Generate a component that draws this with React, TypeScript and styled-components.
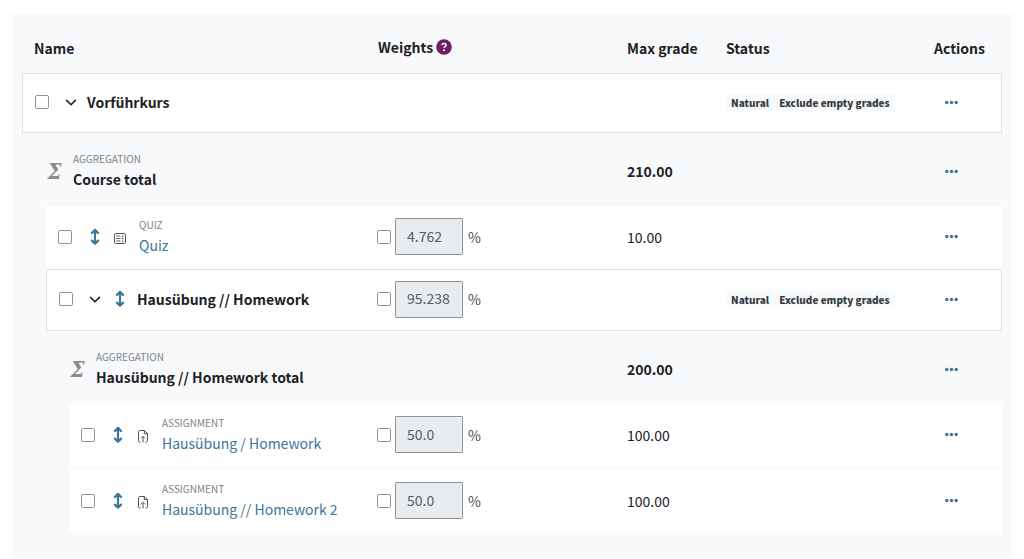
import React from "react";
import styled, { createGlobalStyle } from "styled-components";

const color = {
  text: "#1d2125",
  muted: "#7b838a",
  link: "#3d7699",
  panel: "#f8f9fb",
  line: "#dee2e6",
  control: "#8f959e",
  field: "#e8ecee",
  help: "#6d2063",
};

const GlobalStyle = createGlobalStyle`
  *, *::before, *::after { box-sizing: border-box; }
  body {
    margin: 0;
    background: #fff;
    color: ${color.text};
    font-family: "Noto Sans CJK SC", "Noto Sans", sans-serif;
    font-size: 14px;
    line-height: 20px;
  }
`;

const Panel = styled.main`
  margin: 14px 12px 0;
  padding: 0 10px 25px;
  background: ${color.panel};
`;

const Table = styled.table`
  width: 100%;
  table-layout: fixed;
  border-collapse: separate;
  border-spacing: 0;
`;

const Col = styled.col<{ $width?: number }>`
  width: ${(p) => (p.$width ? `${p.$width}px` : "auto")};
`;

const HeadCell = styled.th`
  height: 59px;
  padding: 0 0 15px 12px;
  text-align: left;
  vertical-align: bottom;
  font-weight: 700;
  white-space: nowrap;
`;

const HelpLabel = styled.span`
  display: flex;
  align-items: center;
  gap: 3px;
  height: 23px;
`;

type Kind = "category" | "total" | "item";

const Indent = styled.td`
  padding: 0;
`;

const Cell = styled.td`
  padding: 0 0 2px 12px;
  vertical-align: middle;
  white-space: nowrap;
`;

const WeightCell = styled(Cell)`
  padding-left: 11px;
`;

const Row = styled.tr<{ $kind: Kind; $height: number }>`
  height: ${(p) => p.$height}px;

  ${Cell} {
    ${(p) =>
      p.$kind === "category" &&
      `
      background: #fff;
      border-top: 1px solid ${color.line};
      border-bottom: 1px solid ${color.line};
      &[data-first] { border-left: 1px solid ${color.line}; }
      &:last-child { border-right: 1px solid ${color.line}; }
    `}
    ${(p) =>
      p.$kind === "item" &&
      `
      background: #fff;
      border-top: 3px solid ${color.panel};
    `}
    ${(p) =>
      p.$kind === "total" &&
      `
      padding-top: 8px;
      font-weight: 700;
      &[data-first] { padding-left: 0; }
    `}
  }
`;

const Line = styled.div`
  display: flex;
  align-items: center;
`;

const Checkbox = styled.input.attrs({ type: "checkbox" })`
  appearance: none;
  flex: none;
  width: 14px;
  height: 14px;
  margin: 0;
  border: 1px solid ${color.control};
  border-radius: 2px;
  background: #fff;

  &:checked {
    background: ${color.link};
  }
`;

const IconButton = styled.button<{ $width: number }>`
  display: flex;
  align-items: center;
  justify-content: center;
  flex: none;
  width: ${(p) => p.$width}px;
  height: 24px;
  padding: 0;
  border: 0;
  background: none;
  color: ${color.link};
  cursor: pointer;
`;

const ToggleButton = styled(IconButton)`
  color: ${color.text};
`;

const HelpButton = styled(IconButton)`
  height: 16px;
  color: ${color.help};
`;

const Controls = styled.div`
  display: flex;
  align-items: center;
  margin-left: 10px;
`;

const TypeIcon = styled.span`
  display: flex;
  justify-content: center;
  width: 24px;
  color: #4f565c;
`;

const CategoryName = styled.span`
  padding-left: 4px;
  font-weight: 700;
`;

const Sigma = styled.span`
  width: 17px;
  margin-right: 10px;
  text-align: center;
  font: italic 700 22px/24px "DejaVu Serif Condensed", "DejaVu Serif", serif;
  color: #8b8b8b;
`;

const NameStack = styled.div<{ $gap?: number }>`
  display: flex;
  flex-direction: column;
  padding-left: ${(p) => p.$gap ?? 0}px;
  padding-bottom: 4px;
`;

const TypeLabel = styled.span`
  font-size: 10px;
  font-weight: 400;
  line-height: 20px;
  color: ${color.muted};
  text-transform: uppercase;
`;

const ItemLink = styled.a`
  color: ${color.link};
  text-decoration: none;
`;

const WeightInput = styled.input`
  width: 68px;
  height: 37px;
  margin: 0 5px 0 4px;
  padding: 0 11px 2px;
  border: 1px solid ${color.control};
  border-radius: 1px;
  background: ${color.field};
  color: #555c62;
  font: inherit;
`;

const Unit = styled.span`
  color: #495057;
`;

const Badge = styled.span`
  padding: 0 5px;
  border-radius: 2px;
  background: #f8f9fa;
  color: #343a40;
  font-size: 10px;
  font-weight: 900;
  line-height: 17px;
`;

const Chevron = () => (
  <svg width="12" height="12" viewBox="0 0 12 12" fill="none" stroke="currentColor" strokeWidth="1.6" strokeLinecap="round" strokeLinejoin="round" aria-hidden="true">
    <path d="M1.6 4.4 6 8.8l4.4-4.4" />
  </svg>
);

const MoveIcon = () => (
  <svg width="10" height="18" viewBox="0 0 10 18" fill="none" stroke="currentColor" strokeWidth="2.2" strokeLinecap="round" strokeLinejoin="round" aria-hidden="true">
    <path d="M5 2.2v13.2M1.9 5l3.1-3.1L8.1 5M1.9 12.6 5 15.7l3.1-3.1" />
  </svg>
);

const DotsIcon = () => (
  <svg width="13" height="5" viewBox="0 0 13 5" fill="currentColor" aria-hidden="true">
    <circle cx="1.8" cy="2.5" r="1.75" />
    <circle cx="6.5" cy="2.5" r="1.75" />
    <circle cx="11.2" cy="2.5" r="1.75" />
  </svg>
);

const HelpIcon = () => (
  <svg width="16" height="16" viewBox="0 0 16 16" aria-hidden="true">
    <circle cx="8" cy="8" r="7.8" fill="currentColor" />
    <path d="M5.9 6.2c.1-1.1.9-1.7 2.1-1.7s2.1.7 2.1 1.7c0 1.3-1.9 1.4-1.9 2.9" fill="none" stroke="#fff" strokeWidth="1.5" />
    <circle cx="8.1" cy="11.3" r="1" fill="#fff" />
  </svg>
);

const QuizIcon = () => (
  <svg width="12" height="16" viewBox="0 0 12 16" fill="none" stroke="currentColor" aria-hidden="true">
    <rect x="0.5" y="4.5" width="11" height="10" rx="1.4" />
    <path d="M2.2 7h4.2M2.2 9.5h4.2M2.2 12h4.2" strokeWidth="0.9" />
    <path d="M8.6 6.4v1.3M8.6 8.9v1.3M8.6 11.4v1.3" strokeWidth="1.6" />
  </svg>
);

const AssignmentIcon = () => (
  <svg width="10" height="18" viewBox="0 0 10 18" fill="none" stroke="currentColor" strokeLinecap="round" strokeLinejoin="round" aria-hidden="true">
    <path d="M2.2 16H1.7c-.7 0-1.2-.5-1.2-1.2V5.7c0-.7.5-1.2 1.2-1.2h4.6l3.2 3.1v7.2c0 .7-.5 1.2-1.2 1.2h-.5" />
    <path d="M6.3 4.6v3h3.1" />
    <path d="M5 16v-5.2M3.2 12.1 5 10.3l1.8 1.8" />
  </svg>
);

type Entry = {
  kind: Kind;
  level: 0 | 1 | 2;
  height: number;
  name: string;
  type?: string;
  icon?: "quiz" | "assignment";
  weight?: string;
  grade?: string;
  status?: string[];
};

const natural = ["Natural", "Exclude empty grades"];

const entries: Entry[] = [
  { kind: "category", level: 0, height: 60, name: "Vorführkurs", status: natural },
  { kind: "total", level: 1, height: 70, name: "Course total", type: "Aggregation", grade: "210.00" },
  { kind: "item", level: 1, height: 66, name: "Quiz", type: "Quiz", icon: "quiz", weight: "4.762", grade: "10.00" },
  { kind: "category", level: 1, height: 62, name: "Hausübung // Homework", weight: "95.238", status: natural },
  { kind: "total", level: 2, height: 70, name: "Hausübung // Homework total", type: "Aggregation", grade: "200.00" },
  { kind: "item", level: 2, height: 66, name: "Hausübung / Homework", type: "Assignment", icon: "assignment", weight: "50.0", grade: "100.00" },
  { kind: "item", level: 2, height: 66, name: "Hausübung // Homework 2", type: "Assignment", icon: "assignment", weight: "50.0", grade: "100.00" },
];

const NameContent = ({ entry }: { entry: Entry }) => {
  if (entry.kind === "total") {
    return (
      <Line>
        <Sigma aria-hidden="true">Σ</Sigma>
        <NameStack>
          <TypeLabel>{entry.type}</TypeLabel>
          <span>{entry.name}</span>
        </NameStack>
      </Line>
    );
  }
  const category = entry.kind === "category";
  return (
    <Line>
      <Checkbox aria-label={`Select ${entry.name}`} />
      <Controls>
        {category && (
          <ToggleButton $width={24} type="button" aria-label={`Collapse ${entry.name}`} aria-expanded="true">
            <Chevron />
          </ToggleButton>
        )}
        {entry.level > 0 && (
          <IconButton $width={26} type="button" aria-label={`Move ${entry.name}`}>
            <MoveIcon />
          </IconButton>
        )}
        {entry.icon && <TypeIcon>{entry.icon === "quiz" ? <QuizIcon /> : <AssignmentIcon />}</TypeIcon>}
      </Controls>
      {category ? (
        <CategoryName>{entry.name}</CategoryName>
      ) : (
        <NameStack $gap={7}>
          <TypeLabel>{entry.type}</TypeLabel>
          <ItemLink href="#">{entry.name}</ItemLink>
        </NameStack>
      )}
    </Line>
  );
};

const GradeRow = ({ entry }: { entry: Entry }) => (
  <Row $kind={entry.kind} $height={entry.height}>
    {entry.level > 0 && <Indent colSpan={entry.level} />}
    <Cell data-first colSpan={3 - entry.level}>
      <NameContent entry={entry} />
    </Cell>
    <WeightCell>
      {entry.weight && (
        <Line>
          <Checkbox aria-label={`Adjust weight of ${entry.name}`} />
          <WeightInput disabled defaultValue={entry.weight} aria-label={`Weight of ${entry.name}`} />
          <Unit>%</Unit>
        </Line>
      )}
    </WeightCell>
    <Cell>{entry.grade}</Cell>
    <Cell>
      {entry.status && (
        <Line>
          {entry.status.map((label) => (
            <Badge key={label}>{label}</Badge>
          ))}
        </Line>
      )}
    </Cell>
    <Cell>
      <IconButton $width={35} type="button" aria-label={`Actions for ${entry.name}`}>
        <DotsIcon />
      </IconButton>
    </Cell>
  </Row>
);

export default function App() {
  return (
    <>
      <GlobalStyle />
      <Panel>
        <Table>
          <colgroup>
            <Col $width={24} />
            <Col $width={23} />
            <Col />
            <Col $width={249} />
            <Col $width={99} />
            <Col $width={208} />
            <Col $width={80} />
          </colgroup>
          <thead>
            <tr>
              <HeadCell scope="col" colSpan={3}>Name</HeadCell>
              <HeadCell scope="col">
                <HelpLabel>
                  Weights
                  <HelpButton $width={16} type="button" aria-label="Help with weights">
                    <HelpIcon />
                  </HelpButton>
                </HelpLabel>
              </HeadCell>
              <HeadCell scope="col">Max grade</HeadCell>
              <HeadCell scope="col">Status</HeadCell>
              <HeadCell scope="col">Actions</HeadCell>
            </tr>
          </thead>
          <tbody>
            {entries.map((entry) => (
              <GradeRow key={entry.name} entry={entry} />
            ))}
          </tbody>
        </Table>
      </Panel>
    </>
  );
}
